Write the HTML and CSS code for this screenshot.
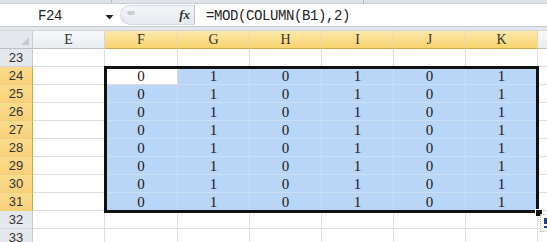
FILE: index.html
```html
<!DOCTYPE html>
<html>
<head>
<meta charset="utf-8">
<link rel="stylesheet" href="styles.css">
</head>
<body>
<div class="app">
  <div class="topstrip"><span class="tick t1"></span><span class="tick t2"></span></div>
  <div class="fbar">
    <div class="namebox">F24</div>
    <div class="dd"><svg width="9" height="6" viewBox="0 0 9 6"><path d="M0.5 1 H8.5 L4.5 5.5 Z" fill="#222"/></svg></div>
    <div class="pill"><span class="grip"></span><span class="fx">fx</span></div>
    <div class="formula">=MOD(COLUMN(B1),2)</div>
  </div>
  <div class="gap"></div>
  <div class="sheet">
    <div class="grid">
      <div class="corner"><svg width="8" height="8" viewBox="0 0 8 8"><path d="M8 0 V8 H0 Z" fill="#c4c8cf"/></svg></div>
      <div class="ch">E</div>
      <div class="ch sel">F</div>
      <div class="ch sel">G</div>
      <div class="ch sel">H</div>
      <div class="ch sel">I</div>
      <div class="ch sel">J</div>
      <div class="ch sel">K</div>
      <div class="ch"></div>

      <div class="rh">23</div><div class="c"></div><div class="c"></div><div class="c"></div><div class="c"></div><div class="c"></div><div class="c"></div><div class="c"></div><div class="c"></div>

      <div class="rh sel">24</div><div class="c"></div><div class="c active">0</div><div class="c s">1</div><div class="c s">0</div><div class="c s">1</div><div class="c s">0</div><div class="c s">1</div><div class="c"></div>
      <div class="rh sel">25</div><div class="c"></div><div class="c s">0</div><div class="c s">1</div><div class="c s">0</div><div class="c s">1</div><div class="c s">0</div><div class="c s">1</div><div class="c"></div>
      <div class="rh sel">26</div><div class="c"></div><div class="c s">0</div><div class="c s">1</div><div class="c s">0</div><div class="c s">1</div><div class="c s">0</div><div class="c s">1</div><div class="c"></div>
      <div class="rh sel">27</div><div class="c"></div><div class="c s">0</div><div class="c s">1</div><div class="c s">0</div><div class="c s">1</div><div class="c s">0</div><div class="c s">1</div><div class="c"></div>
      <div class="rh sel">28</div><div class="c"></div><div class="c s">0</div><div class="c s">1</div><div class="c s">0</div><div class="c s">1</div><div class="c s">0</div><div class="c s">1</div><div class="c"></div>
      <div class="rh sel">29</div><div class="c"></div><div class="c s">0</div><div class="c s">1</div><div class="c s">0</div><div class="c s">1</div><div class="c s">0</div><div class="c s">1</div><div class="c"></div>
      <div class="rh sel">30</div><div class="c"></div><div class="c s">0</div><div class="c s">1</div><div class="c s">0</div><div class="c s">1</div><div class="c s">0</div><div class="c s">1</div><div class="c"></div>
      <div class="rh sel">31</div><div class="c"></div><div class="c s">0</div><div class="c s">1</div><div class="c s">0</div><div class="c s">1</div><div class="c s">0</div><div class="c s">1</div><div class="c"></div>

      <div class="rh">32</div><div class="c"></div><div class="c"></div><div class="c"></div><div class="c"></div><div class="c"></div><div class="c"></div><div class="c"></div><div class="c"></div>
      <div class="rh">33</div><div class="c"></div><div class="c"></div><div class="c"></div><div class="c"></div><div class="c"></div><div class="c"></div><div class="c"></div><div class="c"></div>
    </div>
    <div class="selbox"></div>
    <div class="handle"></div>
    <div class="paste"><span class="clip"></span></div>
  </div>
</div>
</body>
</html>
```

FILE: styles.css
```css
html, body {
  margin: 0;
  padding: 0;
  background: #ffffff;
  overflow: hidden;
}
.app {
  width: 547px;
  height: 242px;
  overflow: hidden;
  font-family: "Liberation Mono", monospace;
  color: #222;
}
.topstrip {
  height: 3px;
  background: #dfe3e9;
  border-bottom: 1px solid #c9ced6;
  position: relative;
}
.tick {
  position: absolute;
  top: 0;
  width: 1px;
  height: 3px;
  background: #b3b9c2;
}
.t1 { left: 111px; }
.t2 { left: 363px; }
.fbar {
  height: 22px;
  display: flex;
  align-items: center;
  background: #ffffff;
  border-bottom: 1px solid #c3c9d1;
}
.namebox {
  width: 100px;
  text-align: center;
  font-size: 14px;
  letter-spacing: -0.4px;
  line-height: 22px;
  padding-top: 1px;
}
.dd {
  width: 18px;
  display: flex;
  justify-content: center;
  align-items: center;
  padding-top: 3px;
}
.pill {
  margin-left: 2px;
  width: 75px;
  height: 20px;
  box-sizing: border-box;
  background: linear-gradient(#f3f5f8, #e6e9ee);
  border-radius: 10px 0 0 10px;
  border: 1px solid #d3d8df;
  border-right: 1px solid #b9c0c9;
  display: flex;
  align-items: center;
  position: relative;
}
.grip {
  position: absolute;
  left: 6px;
  top: 5px;
  width: 8px;
  height: 4px;
  border-radius: 4px;
  background: #c9ced5;
}
.fx {
  margin-left: auto;
  margin-right: 4px;
  font-family: "Liberation Serif", serif;
  font-style: italic;
  font-weight: bold;
  font-size: 13px;
  color: #333;
}
.formula {
  margin-left: 11px;
  font-size: 14px;
  letter-spacing: -0.4px;
  line-height: 22px;
  padding-top: 1px;
  white-space: nowrap;
}
.gap {
  height: 3px;
  background: #e3e7ec;
  border-bottom: 1px solid #d0d5dc;
}
.sheet {
  position: relative;
}
.grid {
  display: grid;
  grid-template-columns: 33px 72px 73px 72px 72px 72px 72px 72px 72px;
  grid-auto-rows: 18px;
}
.grid > div {
  box-sizing: border-box;
}
.corner {
  background: #e4e7ec;
  border-right: 1px solid #c9ced6;
  border-bottom: 1px solid #b8bfc8;
  display: flex;
  justify-content: flex-end;
  align-items: flex-end;
  padding: 0 3px 3px 0;
}
.ch {
  background: linear-gradient(#f8f9fb, #e9ecf0);
  border-right: 1px solid #d3d7dd;
  border-bottom: 1px solid #b8bfc8;
  text-align: center;
  font-family: "Liberation Serif", serif;
  font-size: 14px;
  line-height: 17px;
  color: #333;
}
.ch.sel {
  background: linear-gradient(#fde9ad, #f8d46e);
  border-right: 1px solid #ecd9a6;
  border-bottom: 1px solid #c9a650;
}
.rh {
  background: #e4e7ec;
  border-right: 1px solid #c3c9d1;
  border-bottom: 1px solid #d1d6dd;
  text-align: center;
  font-family: "Liberation Sans", Arial, sans-serif;
  font-size: 13px;
  line-height: 18px;
  color: #333;
}
.rh.sel {
  background: linear-gradient(#fbdc8c, #f8d17a);
  border-right: 1px solid #c9a650;
  border-bottom: 1px solid #f1cf7e;
}
.c {
  border-right: 1px solid #dadcdd;
  border-bottom: 1px solid #dadcdd;
  text-align: center;
  font-family: "Liberation Serif", serif;
  font-size: 15px;
  line-height: 18px;
  color: #1a1a1a;
}
.c.s {
  background: #b9d6f6;
  border-right-color: #c9dff6;
  border-bottom-color: #c9dff6;
}
.c.active {
  background: #ffffff;
}
.selbox {
  position: absolute;
  left: 104px;
  top: 35px;
  width: 435px;
  height: 147px;
  box-sizing: border-box;
  border: 3px solid #111;
}
.handle {
  position: absolute;
  left: 535px;
  top: 178px;
  width: 6px;
  height: 6px;
  background: #111;
  border: 1px solid #fff;
}
.paste {
  position: absolute;
  left: 540px;
  top: 183px;
  width: 20px;
  height: 18px;
  box-sizing: border-box;
  border: 1px dotted #b7b28d;
  background: #fbfaf0;
}
.clip {
  position: absolute;
  left: 3px;
  top: 3px;
  width: 8px;
  height: 6px;
  background: #2a3f8a;
  border-bottom: 2px solid #ffffff;
  box-shadow: 0 2px 0 #2a3f8a;
}
```
